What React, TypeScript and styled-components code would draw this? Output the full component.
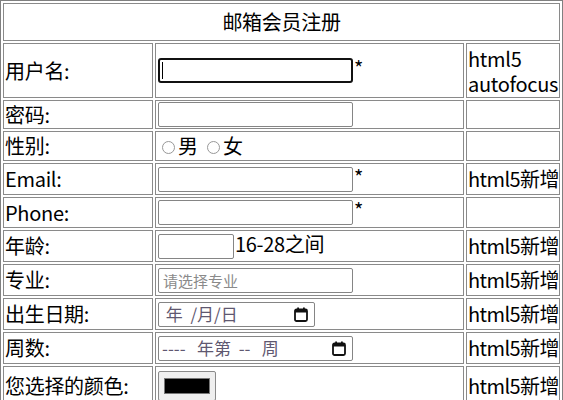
import React from "react";
import styled, { createGlobalStyle } from "styled-components";

const Global = createGlobalStyle`
  body {
    margin: 0;
    background: #fff;
    color: #000;
    font-family: "Noto Sans CJK SC", "Noto Sans", sans-serif;
  }
`;

const Table = styled.table`
  width: 563px;
  table-layout: fixed;
  border: 1px solid #808080;
  border-spacing: 2px;
  font-size: 20px;
  letter-spacing: -0.3px;
`;

const Row = styled.tr<{ $h: number }>`
  height: ${(p) => p.$h}px;
`;

const Cell = styled.td<{ $center?: boolean; $nowrap?: boolean; $tall?: boolean }>`
  border: 1px solid #8a8a8a;
  padding: 1px;
  vertical-align: middle;
  line-height: ${(p) => (p.$tall ? 25 : 16)}px;
  text-align: ${(p) => (p.$center ? "center" : "left")};
  white-space: ${(p) => (p.$nowrap ? "nowrap" : "normal")};
`;

const Note = styled(Cell)`
  white-space: nowrap;
  letter-spacing: -0.6px;
`;

const Field = styled.input<{ $w?: number; $focus?: boolean }>`
  box-sizing: border-box;
  width: ${(p) => p.$w ?? 195}px;
  height: 25px;
  margin: 0 1px;
  padding: 1px 4px;
  border: ${(p) => (p.$focus ? "2px solid #111" : "1px solid #858585")};
  border-radius: ${(p) => (p.$focus ? 3 : 2)}px;
  font-family: "Noto Sans CJK SC", sans-serif;
  font-size: 15px;
  letter-spacing: 0;
  background: #fff;
  outline: none;
  vertical-align: middle;
  &::placeholder {
    color: #8a8a8a;
  }
`;

const FocusWrap = styled.span`
  position: relative;
  display: inline-block;
  vertical-align: middle;
`;

const Caret = styled.span`
  position: absolute;
  left: 5px;
  top: 4px;
  width: 1px;
  height: 17px;
  background: #000;
`;

const Radio = styled.input`
  width: 13px;
  height: 13px;
  margin: 3px 3px 0 5px;
  opacity: 0.75;
`;

const FakeBox = styled.span<{ $w: number }>`
  box-sizing: border-box;
  display: inline-flex;
  align-items: center;
  justify-content: space-between;
  width: ${(p) => p.$w}px;
  height: 25px;
  margin-left: 1px;
  padding: 0 6px 0 3px;
  border: 1px solid #858585;
  border-radius: 2px;
  vertical-align: middle;
  background: #fff;
`;

const DateText = styled.span`
  font-size: 17px;
  line-height: 20px;
  letter-spacing: 0;
  color: #5f5870;
  white-space: pre;
`;

const ColorButton = styled.span`
  box-sizing: border-box;
  display: inline-flex;
  align-items: center;
  justify-content: center;
  width: 58px;
  height: 30px;
  margin-left: 1px;
  border: 1px solid #8a8a8a;
  border-radius: 2px;
  background: #efefef;
  vertical-align: middle;
`;

const Swatch = styled.span`
  width: 46px;
  height: 16px;
  background: #000;
  border: 1px solid #777;
  box-sizing: border-box;
`;

function CalendarIcon() {
  return (
    <svg width="14" height="15" viewBox="0 0 14 15">
      <rect x="1" y="2.5" width="12" height="11.5" rx="1.5" fill="none" stroke="#111" strokeWidth="1.8" />
      <rect x="1" y="2.5" width="12" height="3" fill="#111" />
      <rect x="3.2" y="0.5" width="1.8" height="3" fill="#111" />
      <rect x="9" y="0.5" width="1.8" height="3" fill="#111" />
    </svg>
  );
}

export default function App() {
  return (
    <>
      <Global />
      <Table>
        <colgroup>
          <col style={{ width: 150 }} />
          <col style={{ width: 309 }} />
          <col style={{ width: 94 }} />
        </colgroup>
        <tbody>
          <Row $h={38}>
            <Cell colSpan={3} $center>邮箱会员注册</Cell>
          </Row>
          <Row $h={55}>
            <Cell>用户名:</Cell>
            <Cell>
              <FocusWrap>
                <Field $focus type="text" />
                <Caret />
              </FocusWrap>
              *
            </Cell>
            <Cell $tall>html5<br />autofocus</Cell>
          </Row>
          <Row $h={29}>
            <Cell>密码:</Cell>
            <Cell>
              <Field type="password" />
            </Cell>
            <Cell />
          </Row>
          <Row $h={30}>
            <Cell>性别:</Cell>
            <Cell>
              <Radio type="radio" name="sex" />男 <Radio type="radio" name="sex" />女
            </Cell>
            <Cell />
          </Row>
          <Row $h={32}>
            <Cell>Email:</Cell>
            <Cell>
              <Field type="email" />*
            </Cell>
            <Note>html5新增</Note>
          </Row>
          <Row $h={31}>
            <Cell>Phone:</Cell>
            <Cell>
              <Field type="tel" />*
            </Cell>
            <Cell />
          </Row>
          <Row $h={32}>
            <Cell>年龄:</Cell>
            <Cell $nowrap>
              <Field type="text" $w={76} />16-28之间
            </Cell>
            <Note>html5新增</Note>
          </Row>
          <Row $h={32}>
            <Cell>专业:</Cell>
            <Cell>
              <Field type="text" placeholder="请选择专业" />
            </Cell>
            <Note>html5新增</Note>
          </Row>
          <Row $h={32}>
            <Cell>出生日期:</Cell>
            <Cell>
              <FakeBox $w={157}>
                <DateText>{" 年  /月/日"}</DateText>
                <CalendarIcon />
              </FakeBox>
            </Cell>
            <Note>html5新增</Note>
          </Row>
          <Row $h={32}>
            <Cell>周数:</Cell>
            <Cell>
              <FakeBox $w={195}>
                <DateText>{"----   年第  --   周"}</DateText>
                <CalendarIcon />
              </FakeBox>
            </Cell>
            <Note>html5新增</Note>
          </Row>
          <Row $h={40}>
            <Cell $nowrap>您选择的颜色:</Cell>
            <Cell>
              <ColorButton>
                <Swatch />
              </ColorButton>
            </Cell>
            <Note>html5新增</Note>
          </Row>
        </tbody>
      </Table>
    </>
  );
}
